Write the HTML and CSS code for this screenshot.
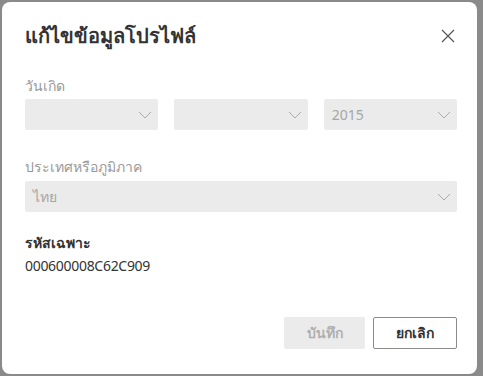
FILE: index.html
```html
<!DOCTYPE html>
<html lang="th">
<head>
  <meta charset="UTF-8">
  <title>แก้ไขข้อมูลโปรไฟล์</title>
  <link rel="stylesheet" href="styles.css">
</head>
<body>
  <div class="dialog">
    <div class="header">
      <h1>แก้ไขข้อมูลโปรไฟล์</h1>
      <button class="close" aria-label="ปิด">
        <svg width="14" height="14" viewBox="0 0 14 14"><path d="M1 1 L13 13 M13 1 L1 13" stroke="#555" stroke-width="1.2" fill="none"/></svg>
      </button>
    </div>

    <div class="field">
      <div class="label muted">วันเกิด</div>
      <div class="row">
        <div class="select"><span></span><svg class="chev" width="14" height="8" viewBox="0 0 14 8"><path d="M1 1 L7 7 L13 1" stroke="#aaa" stroke-width="1" fill="none"/></svg></div>
        <div class="select"><span></span><svg class="chev" width="14" height="8" viewBox="0 0 14 8"><path d="M1 1 L7 7 L13 1" stroke="#aaa" stroke-width="1" fill="none"/></svg></div>
        <div class="select"><span>2015</span><svg class="chev" width="14" height="8" viewBox="0 0 14 8"><path d="M1 1 L7 7 L13 1" stroke="#aaa" stroke-width="1" fill="none"/></svg></div>
      </div>
    </div>

    <div class="field country">
      <div class="label muted">ประเทศหรือภูมิภาค</div>
      <div class="select"><span>ไทย</span><svg class="chev" width="14" height="8" viewBox="0 0 14 8"><path d="M1 1 L7 7 L13 1" stroke="#aaa" stroke-width="1" fill="none"/></svg></div>
    </div>

    <div class="field id">
      <div class="label strong">รหัสเฉพาะ</div>
      <div class="value">000600008C62C909</div>
    </div>

    <div class="actions">
      <button class="btn save" disabled>บันทึก</button>
      <button class="btn cancel">ยกเลิก</button>
    </div>
  </div>
</body>
</html>
```

FILE: styles.css
```css
html, body {
  margin: 0;
  height: 100%;
}
body {
  background: #8a8a8a;
  font-family: "Noto Sans", "Open Sans", sans-serif;
  color: #333;
  padding: 2px 6px 0 2px;
  box-sizing: border-box;
}
.dialog {
  background: #fff;
  border-radius: 8px;
  height: 372px;
  padding: 17px 20px 0 23px;
  box-sizing: border-box;
}
.header {
  display: flex;
  justify-content: space-between;
  align-items: center;
  height: 34px;
}
.header h1 {
  margin: 0;
  font-size: 20px;
  font-weight: 700;
  color: #333;
}
.close {
  border: 0;
  background: none;
  padding: 0;
  margin-right: 2px;
  display: flex;
}
.field {
  margin-top: 23px;
}
.label {
  font-size: 14px;
  line-height: 20px;
  margin-bottom: 3px;
}
.muted {
  color: #999;
}
.strong {
  font-weight: 700;
  color: #333;
  margin-bottom: 3px;
}
.row {
  display: grid;
  grid-template-columns: 1fr 1fr 1fr;
  gap: 16px;
}
.select {
  background: #ebebeb;
  height: 31px;
  border-radius: 2px;
  display: flex;
  align-items: center;
  justify-content: space-between;
  padding: 0 6px 0 8px;
  font-size: 14px;
  color: #a6a6a6;
}
.field.country {
  margin-top: 27px;
}
.field.country .label {
  margin-bottom: 4px;
}
.field.id {
  margin-top: 21px;
}
.value {
  font-size: 14px;
  letter-spacing: -0.3px;
  color: #333;
}
.actions {
  display: flex;
  justify-content: flex-end;
  gap: 8px;
  margin-top: 42px;
}
.btn {
  font-family: inherit;
  font-size: 14px;
  font-weight: 700;
  height: 32px;
  border-radius: 2px;
}
.save {
  width: 81px;
  background: #ebebeb;
  border: 0;
  color: #b0b0b0;
}
.cancel {
  width: 84px;
  background: #fff;
  border: 1px solid #8a8a8a;
  color: #333;
}
```
